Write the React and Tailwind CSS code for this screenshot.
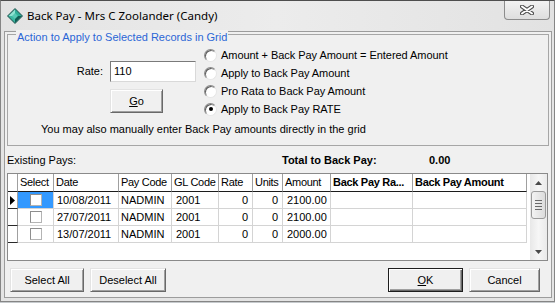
import React from 'react';

const cols = [
    { label: '', w: 'w-[10px]' },
    { label: 'Select', w: 'w-[36px]' },
    { label: 'Date', w: 'w-[65px]' },
    { label: 'Pay Code', w: 'w-[53px]' },
    { label: 'GL Code', w: 'w-[47px]' },
    { label: 'Rate', w: 'w-[34px]' },
    { label: 'Units', w: 'w-[30px]' },
    { label: 'Amount', w: 'w-[48px]' },
    { label: 'Back Pay Ra...', w: 'w-[82px]', bold: true },
    { label: 'Back Pay Amount', w: 'w-[114px]', bold: true },
];

const pays = [
    { date: '10/08/2011', code: 'NADMIN', gl: '2001', rate: '0', units: '0', amount: '2100.00' },
    { date: '27/07/2011', code: 'NADMIN', gl: '2001', rate: '0', units: '0', amount: '2100.00' },
    { date: '13/07/2011', code: 'NADMIN', gl: '2001', rate: '0', units: '0', amount: '2000.00' },
];

const options = [
    'Amount + Back Pay Amount = Entered Amount',
    'Apply to Back Pay Amount',
    'Pro Rata to Back Pay Amount',
    'Apply to Back Pay RATE',
];

const btn =
    'flex items-center justify-center h-[24px] bg-[#f0f0f0] border border-t-[#e3e3e3] border-l-[#e3e3e3] border-r-[#696969] border-b-[#696969] shadow-[inset_1px_1px_0_#ffffff,inset_-1px_-1px_0_#a0a0a0] text-black';

function GemIcon() {
    return (
        <svg width="16" height="16" viewBox="0 0 16 16">
            <polygon points="8,0.5 15.5,8 8,15.5 0.5,8" fill="#1b7d70" stroke="#2c5f59" strokeWidth="1" />
            <polygon points="8,1.5 8,8 1.5,8" fill="#8fe3d2" />
            <polygon points="8,1.5 14.5,8 8,8" fill="#2fae98" />
            <polygon points="1.5,8 8,8 8,14.5" fill="#3cb8a2" />
            <polygon points="8,8 14.5,8 8,14.5" fill="#0f5e54" />
            <polygon points="8,5 11,8 8,11 5,8" fill="#56c9b4" />
        </svg>
    );
}

function CloseGlyph() {
    return (
        <svg width="14" height="10" viewBox="0 0 14 10">
            <path d="M2 1.5 L12 8.5 M12 1.5 L2 8.5" stroke="#4d4d4d" strokeWidth="4" strokeLinecap="round" />
            <path d="M2 1.5 L12 8.5 M12 1.5 L2 8.5" stroke="#ffffff" strokeWidth="2" strokeLinecap="round" />
        </svg>
    );
}

function Radio({ checked }) {
    return (
        <span className="flex items-center justify-center w-[13px] h-[13px] rounded-full bg-white border border-t-[#8a8a8a] border-l-[#8a8a8a] border-r-[#e6e6e6] border-b-[#e6e6e6] shadow-[inset_1px_1px_0_#5e5e5e]">
            {checked && <span className="w-[4px] h-[4px] rounded-full bg-black" />}
        </span>
    );
}

function CheckBox() {
    return (
        <span className="block w-[12px] h-[12px] bg-white border border-[#b4b4b4] border-t-[#8e8e8e] border-l-[#8e8e8e]" />
    );
}

export default function App() {
    return (
        <div className="w-[555px] h-[303px] bg-[#c6cacd] overflow-hidden font-['Liberation_Sans',Arial,sans-serif] text-[11px] text-black">
            <div className="w-[555px] h-[302px] bg-[#e4e4e4] border border-[#858585] border-t-[#4e4e4e] flex flex-col">
                {/* title bar */}
                <div className="h-[30px] flex items-center bg-linear-to-r from-[#e3e3e3] via-[#ececec] to-[#e2e2e2]">
                    <div className="ml-[6px]">
                        <GemIcon />
                    </div>
                    <span className="ml-[4px] text-[11.5px] font-['Noto_Sans',sans-serif] text-black">
                        Back Pay - Mrs C Zoolander (Candy)
                    </span>
                    <div className="ml-auto mr-[4px] self-start w-[46px] h-[19px] flex items-center justify-center rounded-b-[4px] border border-t-0 border-[#8c8c8c] bg-linear-to-b from-[#f2f2f2] to-[#dedede]">
                        <CloseGlyph />
                    </div>
                </div>

                {/* client area */}
                <div className="ml-[3px] w-[548px] h-[267px] border border-[#9c9c9c] bg-[#f0f0f0] flex flex-col">
                    {/* group box */}
                    <div className="relative ml-[2px] mt-[2px] w-[542px] h-[112px] border border-[#a6a6a6] flex flex-col">
                        <span className="absolute left-[8px] top-[-5px] px-[1px] leading-[14px] bg-[#f0f0f0] text-[#2b66d6]">
                            Action to Apply to Selected Records in Grid
                        </span>
                        <div className="flex pt-[11px]">
                            <div className="w-[196px] pt-[15px]">
                                <div className="flex items-center">
                                    <span className="w-[95px] text-right">Rate:</span>
                                    <div className="ml-[7px] w-[86px] h-[21px] bg-white border border-t-[#7a7a7a] border-l-[#7a7a7a] border-r-[#d9d9d9] border-b-[#d9d9d9] flex items-center pl-[3px]">
                                        110
                                    </div>
                                </div>
                                <div className={`${btn} mt-[7px] ml-[102px] w-[53px]`}>
                                    <span>
                                        <span className="underline">G</span>o
                                    </span>
                                </div>
                            </div>
                            <div className="flex flex-col tracking-[-0.05px]">
                                {options.map((o, i) => (
                                    <div key={o} className="h-[18px] flex items-center gap-[4px]">
                                        <Radio checked={i === 3} />
                                        <span>{o}</span>
                                    </div>
                                ))}
                            </div>
                        </div>
                        <div className="mt-[3px] pl-[33px] h-[16px] leading-[16px]">
                            You may also manually enter Back Pay amounts directly in the grid
                        </div>
                    </div>

                    {/* totals row */}
                    <div className="mt-[6px] h-[16px] flex items-center pl-[2px]">
                        <span className="w-[275px]">Existing Pays:</span>
                        <span className="w-[147px] font-bold">Total to Back Pay:</span>
                        <span className="font-bold">0.00</span>
                    </div>

                    {/* grid */}
                    <div className="mt-[5px] ml-[2px] w-[541px] h-[88px] border border-[#8a8a8a] bg-white flex">
                        <div className="w-[522px] flex flex-col">
                            <div className="flex h-[18px] tracking-[-0.3px]">
                                {cols.map((c, i) => (
                                    <div
                                        key={i}
                                        className={`${c.w} h-full flex items-center pl-[2px] border-r border-[#a0a0a0] border-b border-b-[#1c1c1c] overflow-hidden whitespace-nowrap ${
                                            c.bold ? 'font-bold' : ''
                                        }`}
                                    >
                                        {c.label}
                                    </div>
                                ))}
                            </div>
                            {pays.map((p, r) => (
                                <div key={r} className="flex h-[17px]">
                                    <div className="w-[10px] h-full flex items-center pl-[2px] border-r border-[#a0a0a0] border-b border-b-[#2a2a2a]">
                                        {r === 0 && (
                                            <svg width="5" height="9" viewBox="0 0 5 9">
                                                <polygon points="0,0 5,4.5 0,9" fill="#000" />
                                            </svg>
                                        )}
                                    </div>
                                    <div
                                        className={`w-[36px] h-full flex items-center justify-center border-r border-b border-[#d4d4d4] ${
                                            r === 0 ? 'bg-[#3399ff]' : ''
                                        }`}
                                    >
                                        <CheckBox />
                                    </div>
                                    <div className="w-[65px] h-full flex items-center pl-[3px] border-r border-b border-[#d4d4d4]">
                                        {p.date}
                                    </div>
                                    <div className="w-[53px] h-full flex items-center pl-[2px] border-r border-b border-[#d4d4d4]">
                                        {p.code}
                                    </div>
                                    <div className="w-[47px] h-full flex items-center pl-[4px] border-r border-b border-[#d4d4d4]">
                                        {p.gl}
                                    </div>
                                    <div className="w-[34px] h-full flex items-center justify-end pr-[4px] border-r border-b border-[#d4d4d4]">
                                        {p.rate}
                                    </div>
                                    <div className="w-[30px] h-full flex items-center justify-end pr-[4px] border-r border-b border-[#d4d4d4]">
                                        {p.units}
                                    </div>
                                    <div className="w-[48px] h-full flex items-center pl-[4px] border-r border-b border-[#d4d4d4]">
                                        {p.amount}
                                    </div>
                                    <div className="w-[82px] h-full border-r border-b border-[#d4d4d4]" />
                                    <div className="w-[114px] h-full border-r border-b border-[#d4d4d4]" />
                                </div>
                            ))}
                        </div>
                        {/* vertical scrollbar */}
                        <div className="ml-auto w-[17px] h-full flex flex-col bg-linear-to-r from-[#e8e8e8] via-[#f6f6f6] to-[#eaeaea]">
                            <div className="h-[17px] flex items-center justify-center">
                                <svg width="7" height="4" viewBox="0 0 7 4">
                                    <polygon points="0,4 3.5,0 7,4" fill="#4a4a4a" />
                                </svg>
                            </div>
                            <div className="mx-[1px] h-[28px] rounded-[3px] border border-[#9a9a9a] bg-linear-to-r from-[#f3f3f3] to-[#dcdcdc] flex flex-col items-center justify-center gap-[2px]">
                                <span className="block w-[7px] h-px bg-[#6a6a6a]" />
                                <span className="block w-[7px] h-px bg-[#6a6a6a]" />
                                <span className="block w-[7px] h-px bg-[#6a6a6a]" />
                                <span className="block w-[7px] h-px bg-[#6a6a6a]" />
                            </div>
                            <div className="mt-auto h-[17px] flex items-center justify-center">
                                <svg width="7" height="4" viewBox="0 0 7 4">
                                    <polygon points="0,0 3.5,4 7,0" fill="#4a4a4a" />
                                </svg>
                            </div>
                        </div>
                    </div>

                    {/* buttons */}
                    <div className="mt-[7px] flex">
                        <div className={`${btn} ml-[5px] w-[74px]`}>Select All</div>
                        <div className={`${btn} ml-[6px] w-[76px]`}>Deselect All</div>
                        <div className="ml-auto w-[75px] h-[24px] flex items-center justify-center bg-[#f0f0f0] border border-[#1e1e1e] shadow-[inset_1px_1px_0_#ffffff,inset_-1px_-1px_0_#696969,inset_-2px_-2px_0_#a0a0a0]">
                            <span>
                                <span className="underline">O</span>K
                            </span>
                        </div>
                        <div className={`${btn} ml-[6px] mr-[11px] w-[71px]`}>Cancel</div>
                    </div>
                </div>
            </div>
        </div>
    );
}
